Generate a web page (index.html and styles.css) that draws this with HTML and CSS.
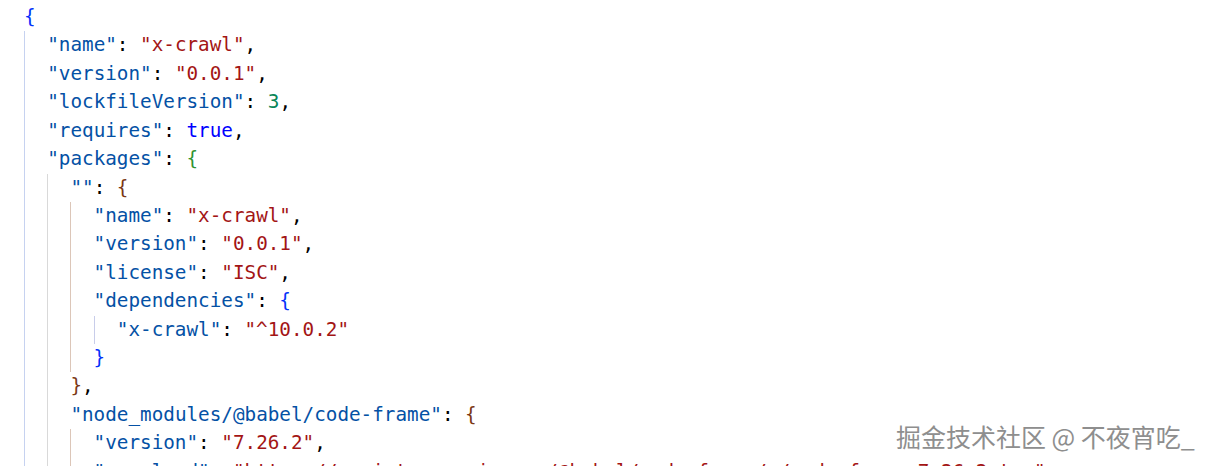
FILE: index.html
```html
<!DOCTYPE html>
<html lang="en">
<head>
<meta charset="utf-8">
<title>package-lock.json</title>
<link rel="stylesheet" href="styles.css">
</head>
<body>
<main class="editor">
  <div class="code">
    <div class="ln"><span class="b1">{</span></div>
    <div class="blk g-blue">
      <div class="ln"><span class="k">"name"</span>: <span class="s">"x-crawl"</span>,</div>
      <div class="ln"><span class="k">"version"</span>: <span class="s">"0.0.1"</span>,</div>
      <div class="ln"><span class="k">"lockfileVersion"</span>: <span class="n">3</span>,</div>
      <div class="ln"><span class="k">"requires"</span>: <span class="kw">true</span>,</div>
      <div class="ln"><span class="k">"packages"</span>: <span class="b2">{</span></div>
      <div class="blk g-grey">
        <div class="ln"><span class="k">""</span>: <span class="b3">{</span></div>
        <div class="blk g-tan">
          <div class="ln"><span class="k">"name"</span>: <span class="s">"x-crawl"</span>,</div>
          <div class="ln"><span class="k">"version"</span>: <span class="s">"0.0.1"</span>,</div>
          <div class="ln"><span class="k">"license"</span>: <span class="s">"ISC"</span>,</div>
          <div class="ln"><span class="k">"dependencies"</span>: <span class="b1">{</span></div>
          <div class="blk g-lav">
            <div class="ln"><span class="k">"x-crawl"</span>: <span class="s">"^10.0.2"</span></div>
          </div>
          <div class="ln"><span class="b1">}</span></div>
        </div>
        <div class="ln"><span class="b3">}</span>,</div>
        <div class="ln"><span class="k">"node_modules/@babel/code-frame"</span>: <span class="b3">{</span></div>
        <div class="blk g-tan">
          <div class="ln"><span class="k">"version"</span>: <span class="s">"7.26.2"</span>,</div>
          <div class="ln"><span class="k">"resolved"</span>: <span class="s">"https://registry.npmjs.org/@babel/code-frame/-/code-frame-7.26.2.tgz"</span>,</div>
        </div>
      </div>
    </div>
  </div>
  <div class="watermark">掘金技术社区 @ 不夜宵吃_</div>
</main>
</body>
</html>
```
FILE: styles.css
```css
html, body {
  margin: 0;
  padding: 0;
  background: #ffffff;
}

body {
  width: 1211px;
  height: 466px;
  overflow: hidden;
}

.editor {
  position: relative;
  width: 1211px;
  height: 466px;
  overflow: hidden;
  background: #ffffff;
}

.code {
  padding: 3px 0 0 24px;
  font-family: "DejaVu Sans Mono", "Liberation Mono", monospace;
  font-size: 19.3px;
  line-height: 28.43px;
  color: #000000;
}

.ln {
  white-space: pre;
  height: 28.43px;
}

.blk {
  padding-left: calc(2ch - 1px);
  border-left: 1px solid #d4d4d4;
}

.g-blue { border-left-color: #c6d2f0; }
.g-grey { border-left-color: #d9d9d9; }
.g-tan  { border-left-color: #dcc6b8; }
.g-lav  { border-left-color: #c8cdea; }

.k  { color: #0451a5; }
.s  { color: #a31515; }
.n  { color: #098658; }
.kw { color: #0000ff; }
.b1 { color: #0431fa; }
.b2 { color: #319331; }
.b3 { color: #7b3814; }

.watermark {
  position: absolute;
  left: 896px;
  top: 419px;
  font-family: "Noto Sans CJK SC", "Noto Sans", sans-serif;
  font-size: 25px;
  line-height: 34px;
  color: #8e8e8e;
  text-shadow: 1px 1px 0 #ffffff, -1px -1px 0 rgba(255,255,255,0.8);
  white-space: nowrap;
}
```
